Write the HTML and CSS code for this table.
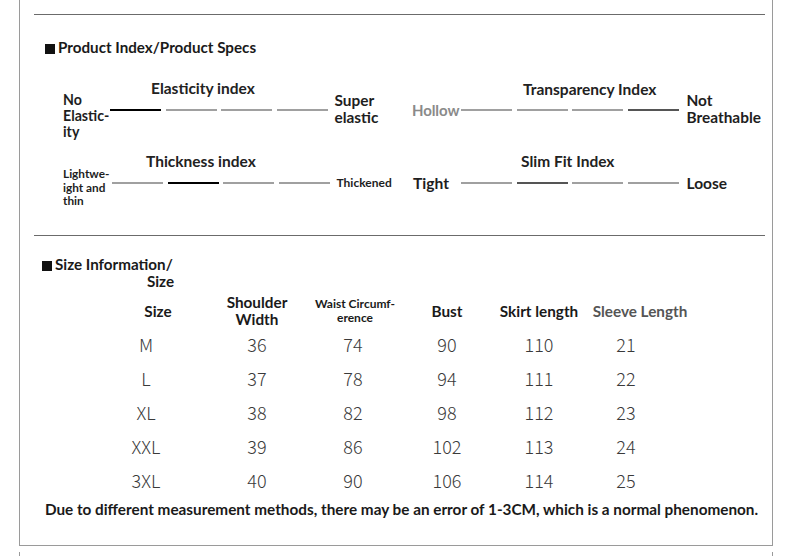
FILE: index.html
```html
<!DOCTYPE html>
<html>
<head>
<meta charset="utf-8">
<link rel="stylesheet" href="styles.css">
</head>
<body>
<div class="page">
  <div class="frame">
    <div class="rule rule-top"></div>

    <div class="sec-head idx-head"><span class="sq"></span>Product Index/Product Specs</div>

    <div class="idx-grid">
      <div class="idx">
        <div class="idx-l l-elastic">No<br>Elastic-<br>ity</div>
        <div class="idx-mid">
          <div class="idx-title t-elastic">Elasticity index</div>
          <div class="bars"><i class="bar on"></i><i class="bar"></i><i class="bar"></i><i class="bar"></i></div>
        </div>
        <div class="idx-r r-two">Super<br>elastic</div>
      </div>

      <div class="idx">
        <div class="idx-l l-side hollow">Hollow</div>
        <div class="idx-mid">
          <div class="idx-title t-trans">Transparency Index</div>
          <div class="bars"><i class="bar"></i><i class="bar"></i><i class="bar"></i><i class="bar dark"></i></div>
        </div>
        <div class="idx-r r-two r-right">Not<br>Breathable</div>
      </div>

      <div class="idx">
        <div class="idx-l l-thick">Lightwe-<br>ight and<br>thin</div>
        <div class="idx-mid">
          <div class="idx-title t-thick">Thickness index</div>
          <div class="bars"><i class="bar"></i><i class="bar on"></i><i class="bar"></i><i class="bar"></i></div>
        </div>
        <div class="idx-r r-small">Thickened</div>
      </div>

      <div class="idx">
        <div class="idx-l l-side l-tight">Tight</div>
        <div class="idx-mid">
          <div class="idx-title t-slim">Slim Fit Index</div>
          <div class="bars"><i class="bar"></i><i class="bar dark"></i><i class="bar"></i><i class="bar"></i></div>
        </div>
        <div class="idx-r r-one r-right">Loose</div>
      </div>
    </div>

    <div class="rule rule-mid"></div>

    <div class="sec-head size-head">
      <div class="size-l1"><span class="sq"></span>Size Information/</div>
      <div class="size-l2">Size</div>
    </div>

    <div class="table">
      <div class="th h-size"><span>Size</span></div>
      <div class="th"><span>Shoulder<br>Width</span></div>
      <div class="th th-small h-waist"><span>Waist Circumf-<br>erence</span></div>
      <div class="th"><span>Bust</span></div>
      <div class="th"><span>Skirt length</span></div>
      <div class="th th-gray h-sleeve"><span>Sleeve Length</span></div>

      <div class="td">M</div><div class="td">36</div><div class="td">74</div><div class="td">90</div><div class="td">110</div><div class="td">21</div>
      <div class="td">L</div><div class="td">37</div><div class="td">78</div><div class="td">94</div><div class="td">111</div><div class="td">22</div>
      <div class="td">XL</div><div class="td">38</div><div class="td">82</div><div class="td">98</div><div class="td">112</div><div class="td">23</div>
      <div class="td">XXL</div><div class="td">39</div><div class="td">86</div><div class="td">102</div><div class="td">113</div><div class="td">24</div>
      <div class="td">3XL</div><div class="td">40</div><div class="td">90</div><div class="td">106</div><div class="td">114</div><div class="td">25</div>
    </div>

    <div class="note">Due to different measurement methods, there may be an error of 1-3CM, which is a normal phenomenon.</div>
  </div>
  <div class="frame-next"></div>
</div>
</body>
</html>
```

FILE: styles.css
```css
* { box-sizing: border-box; }

html, body {
  margin: 0;
  padding: 0;
  background: #ffffff;
}

body {
  font-family: "Lato", "Liberation Sans", sans-serif;
  color: #1e1e1e;
  width: 790px;
  height: 556px;
  overflow: hidden;
}

.page {
  padding-left: 19px;
}

.frame {
  width: 754px;
  height: 546px;
  border: 1px solid #9a9a9a;
  border-top: none;
  display: flex;
  flex-direction: column;
}

.frame-next {
  width: 754px;
  height: 10px;
  margin-top: 6px;
  border-left: 1px solid #9a9a9a;
  border-right: 1px solid #9a9a9a;
}

.rule {
  margin-left: 14px;
  width: 731px;
  height: 1px;
  background: #6b6b6b;
  flex: none;
}

.rule-top { margin-top: 14px; }
.rule-mid { margin-top: 11px; }

.sec-head {
  font-weight: 700;
  font-size: 15.2px;
  line-height: 20px;
  color: #1a1a1a;
  white-space: nowrap;
}

.sq {
  display: inline-block;
  width: 10px;
  height: 10px;
  background: #111;
  margin-right: 3px;
  vertical-align: -0.5px;
}

.idx-head {
  margin-top: 22px;
  padding-left: 25px;
}

.idx-grid {
  margin-top: 21px;
  padding-left: 43px;
  display: grid;
  grid-template-columns: 349px 1fr;
  grid-template-rows: 73px 73px;
}

.idx {
  display: flex;
  align-items: flex-start;
}

.idx-l {
  font-weight: 700;
  flex: none;
  white-space: nowrap;
}

.l-elastic {
  width: 47px;
  font-size: 14.2px;
  line-height: 16px;
  margin-top: 14px;
}

.l-thick {
  width: 49px;
  font-size: 11.8px;
  line-height: 13.5px;
  margin-top: 16px;
}

.l-side {
  width: 49px;
  font-size: 15.6px;
  line-height: 20px;
  margin-top: 22px;
}

.l-tight { padding-left: 1px; }

.hollow {
  color: #8a8a8a;
  font-size: 15px;
  letter-spacing: -0.1px;
}

.idx-mid {
  display: flex;
  flex-direction: column;
  flex: none;
}

.idx-title {
  font-weight: 700;
  font-size: 15.5px;
  line-height: 20px;
  white-space: nowrap;
  color: #222;
}

.t-elastic { margin-left: 41px; }
.t-thick { margin-left: 34px; }
.t-trans { margin-left: 62px; padding-top: 1px; }
.t-slim { margin-left: 60px; }

.bars {
  display: flex;
  gap: 4.5px;
  margin-top: 11px;
}

.t-trans + .bars { margin-top: 10px; }

.bar {
  display: block;
  width: 51px;
  height: 2px;
  background: #a0a0a0;
}

.bar.on { background: #000; }
.bar.dark { background: #555; }

.idx-r {
  font-weight: 700;
  margin-left: 7px;
  white-space: nowrap;
  color: #1e1e1e;
}

.r-right { margin-left: 8px; }

.r-two {
  font-size: 15.4px;
  line-height: 17px;
  margin-top: 14px;
}

.r-one {
  font-size: 15.5px;
  line-height: 20px;
  margin-top: 22px;
}

.r-small {
  font-size: 12px;
  line-height: 14px;
  margin-top: 25px;
}

.size-head {
  margin-top: 20px;
  margin-left: 22px;
  width: 132px;
  line-height: 17px;
}

.size-l2 { text-align: right; }

.table {
  margin-top: 4px;
  margin-left: 70px;
  display: grid;
  grid-template-columns: 112px 110px 82px 106px 78px 96px;
  grid-auto-rows: 34px;
}

.th {
  display: flex;
  align-items: center;
  justify-content: center;
  font-weight: 700;
  font-size: 15.3px;
  line-height: 17px;
  text-align: center;
  white-space: nowrap;
  color: #1a1a1a;
}

.th-small {
  font-size: 12px;
  line-height: 14px;
}

.th-gray { color: #555; }

.h-size span { margin-left: 24px; }
.h-waist span { margin-left: 4px; }
.h-sleeve span { margin-left: 28px; }

.td {
  display: flex;
  align-items: center;
  justify-content: center;
  padding-bottom: 2px;
  font-family: "Noto Sans CJK SC", "Noto Sans", sans-serif;
  font-weight: 300;
  font-size: 18px;
  color: #3a3a3a;
}

.note {
  margin-top: 1px;
  padding-left: 11px;
  text-align: center;
  font-weight: 700;
  font-size: 15.3px;
  line-height: 20px;
  white-space: nowrap;
  color: #1a1a1a;
}
```
